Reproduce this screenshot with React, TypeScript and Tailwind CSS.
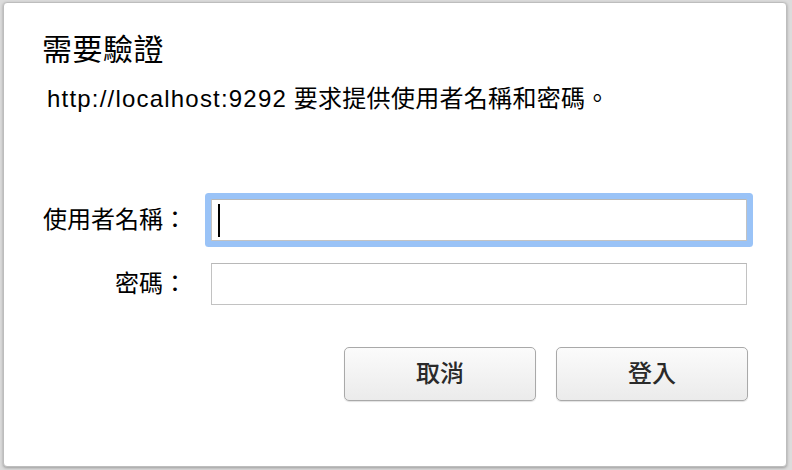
import React from "react";

const font = { fontFamily: '"Liberation Sans", "Noto Sans CJK TC", sans-serif' };

function Field({ focused }: { focused?: boolean }) {
  return (
    <div
      className={
        "relative w-[536px] h-[42px] bg-white border border-[#c2c2c2] border-t-[#b8b8b8] " +
        (focused ? "rounded-[1px] shadow-[0_0_0_6px_#9ac3f7]" : "")
      }
    >
      {focused && <div className="absolute left-[6px] top-[4px] w-[2px] h-[33px] bg-black" />}
    </div>
  );
}

export default function App() {
  return (
    <div className="w-[792px] h-[470px] bg-[#dcdcdc] pt-[2px] pl-[3px] pr-[5px] pb-[3px]" style={font}>
      <div className="h-full bg-white rounded-[4px] border border-[#bdbdbd] shadow-[0_1px_3px_rgba(0,0,0,0.3)] flex flex-col">
        <div className="ml-[38px] mt-[32px] text-[30px] leading-[30px] tracking-[0.5px] text-black">需要驗證</div>
        <div className="ml-[43px] mt-[22px] text-[24px] leading-[24px] text-black">
          <span className="tracking-[1.2px]">http://localhost:9292</span>{" "}
          <span className="tracking-[0.3px]">要求提供使用者名稱和密碼。</span>
        </div>
        <div className="mt-[88px] flex items-center">
          <div className="w-[183px] text-right text-[24px] leading-[24px] text-black">使用者名稱：</div>
          <div className="ml-[24px]">
            <Field focused />
          </div>
        </div>
        <div className="mt-[22px] flex items-center">
          <div className="w-[183px] text-right text-[24px] leading-[24px] text-black">密碼：</div>
          <div className="ml-[24px]">
            <Field />
          </div>
        </div>
        <div className="mt-[42px] ml-[340px] flex gap-[20px]">
          <div className="w-[192px] h-[54px] rounded-[5px] border border-[#a9a9a9] bg-gradient-to-b from-[#fbfbfb] to-[#ebebeb] shadow-[0_1px_1px_rgba(0,0,0,0.12)] flex items-center justify-center text-[24px] font-medium text-[#2a2a2a]">
            取消
          </div>
          <div className="w-[192px] h-[54px] rounded-[5px] border border-[#a9a9a9] bg-gradient-to-b from-[#fbfbfb] to-[#ebebeb] shadow-[0_1px_1px_rgba(0,0,0,0.12)] flex items-center justify-center text-[24px] font-medium text-[#2a2a2a]">
            登入
          </div>
        </div>
      </div>
    </div>
  );
}
